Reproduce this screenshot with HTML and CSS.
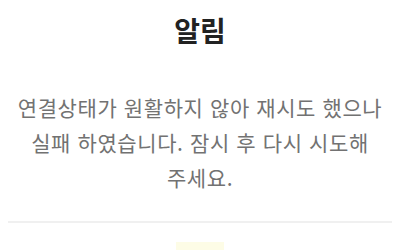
FILE: index.html
```html
<!DOCTYPE html>
<html lang="ko">
<head>
<meta charset="utf-8">
<link rel="stylesheet" href="styles.css">
</head>
<body>
<div class="dialog">
  <h1 class="title">알림</h1>
  <p class="message">연결상태가 원활하지 않아 재시도 했으나<br>실패 하였습니다. 잠시 후 다시 시도해<br>주세요.</p>
  <div class="divider"></div>
  <div class="actions"><span class="btn"></span></div>
</div>
</body>
</html>
```
FILE: styles.css
```css
html, body {
  margin: 0;
  padding: 0;
  background: #ffffff;
}
.dialog {
  width: 400px;
  height: 250px;
  overflow: hidden;
  padding: 0 8px;
  box-sizing: border-box;
  font-family: "Noto Sans CJK KR", "Noto Sans", sans-serif;
  text-align: center;
}
.title {
  margin: 0;
  padding-top: 15px;
  font-size: 28px;
  line-height: 30px;
  font-weight: 700;
  color: #222222;
}
.message {
  margin: 45px 0 0;
  font-size: 21px;
  letter-spacing: 0.6px;
  line-height: 35px;
  color: #727272;
}
.divider {
  margin-top: 26px;
  height: 2px;
  background: #f0f0f0;
}
.actions {
  display: flex;
  justify-content: center;
  padding-top: 19px;
}
.btn {
  display: block;
  width: 48px;
  height: 12px;
  background: #fdfce6;
}
```
